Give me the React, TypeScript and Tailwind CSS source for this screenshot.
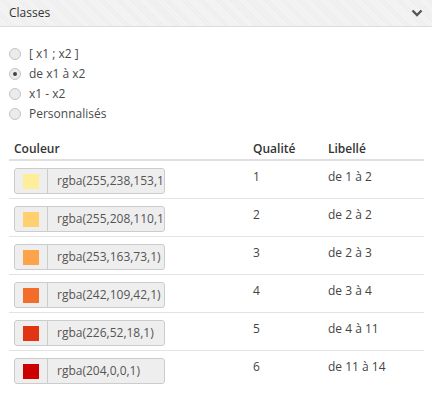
import React from "react";

const rows = [
  { c: "rgba(255,238,153,1)", q: "1", l: "de 1 à 2" },
  { c: "rgba(255,208,110,1)", q: "2", l: "de 2 à 2" },
  { c: "rgba(253,163,73,1)", q: "3", l: "de 2 à 3" },
  { c: "rgba(242,109,42,1)", q: "4", l: "de 3 à 4" },
  { c: "rgba(226,52,18,1)", q: "5", l: "de 4 à 11" },
  { c: "rgba(204,0,0,1)", q: "6", l: "de 11 à 14" },
];

const options = ["[ x1 ; x2 ]", "de x1 à x2", "x1 - x2", "Personnalisés"];

export default function App() {
  return (
    <div
      className="w-[432px] h-[405px] bg-white text-[12px] text-[#444] overflow-hidden"
      style={{ fontFamily: '"Segoe UI", "Open Sans", "Noto Sans", sans-serif' }}
    >
      {/* Header */}
      <div className="h-[27px] flex items-center justify-between pl-[9px] pr-[9px] border-b border-[#dcdcdc] bg-[repeating-linear-gradient(45deg,#f5f5f5_0px,#f5f5f5_1px,#ededed_1px,#ededed_2px)]">
        <span className="text-[12px] text-[#333]">Classes</span>
        <svg width="12" height="8" viewBox="0 0 12 8">
          <path d="M1.5 1.5 L6 6 L10.5 1.5" fill="none" stroke="#555" strokeWidth="2.4" />
        </svg>
      </div>

      {/* Radio options */}
      <div className="pt-[19px] pl-[9px] flex flex-col gap-[4px]">
        {options.map((o, i) => (
          <label key={o} className="flex items-center h-[16px] gap-[8px] text-[#4a4a4a]">
            <span className="w-[12px] h-[12px] rounded-full border border-[#c4c4c4] bg-[#ebebeb] flex items-center justify-center">
              {i === 1 && <span className="w-[4px] h-[4px] rounded-full bg-[#444]" />}
            </span>
            <span>{o}</span>
          </label>
        ))}
      </div>

      {/* Table */}
      <div className="mx-[9px] mt-[17px] w-[415px]">
        <div className="flex h-[22px] items-center font-semibold border-b-2 border-[#e0e0e0] text-[#333]">
          <span className="pl-[5px] w-[244px]">Couleur</span>
          <span className="w-[75px]">Qualité</span>
          <span>Libellé</span>
        </div>
        {rows.map((r, i) => (
          <div
            key={r.q}
            className={`flex h-[38px] items-start pt-[7px] ${i < rows.length - 1 ? "border-b border-[#e3e3e3]" : ""}`}
          >
            <div className="w-[244px] pl-[5px]">
              <div className="w-[151px] h-[26px] flex rounded-[3px] border border-[#ccc] bg-[#eee] overflow-hidden">
                <div className="w-[33px] flex items-center justify-center border-r border-[#ccc]">
                  <span className="w-[16px] h-[15px]" style={{ backgroundColor: r.c }} />
                </div>
                <div className="flex-1 flex items-center pl-[9px] text-[#555] whitespace-nowrap overflow-hidden">
                  {r.c}
                </div>
              </div>
            </div>
            <span className="w-[75px] pt-[2px] leading-[14px]">{r.q}</span>
            <span className="pt-[2px] leading-[14px]">{r.l}</span>
          </div>
        ))}
      </div>
    </div>
  );
}
